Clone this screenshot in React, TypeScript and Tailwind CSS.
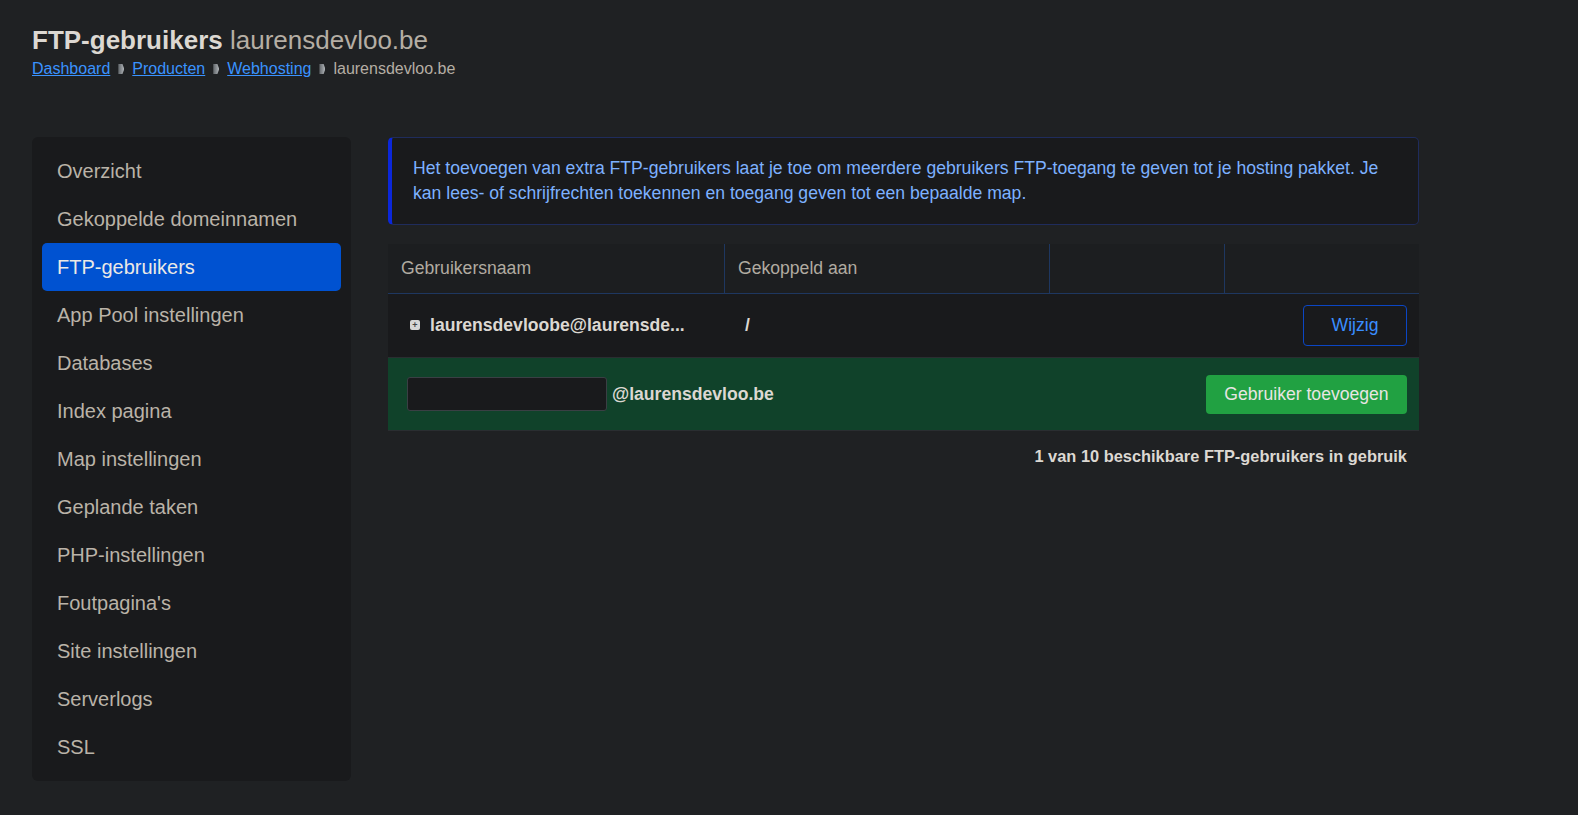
import React from "react";

const items = [
  "Overzicht",
  "Gekoppelde domeinnamen",
  "FTP-gebruikers",
  "App Pool instellingen",
  "Databases",
  "Index pagina",
  "Map instellingen",
  "Geplande taken",
  "PHP-instellingen",
  "Foutpagina's",
  "Site instellingen",
  "Serverlogs",
  "SSL",
];

function Sep() {
  return (
    <span className="mx-[8px] inline-block h-[10px] w-[6px] align-middle bg-gradient-to-r from-[#5d6266] to-[#b0b4b8] [clip-path:polygon(0_0,70%_0,100%_50%,70%_100%,0_100%)]" />
  );
}

export default function App() {
  return (
    <div
      className="min-h-[815px] w-full bg-[#1f2123] px-[32px] pt-[24px]"
      style={{ fontFamily: '"Liberation Sans", Arial, sans-serif' }}
    >
      <h1 className="text-[26px] leading-[32px] text-[#dcd8d2]">
        <span className="font-bold">FTP-gebruikers</span>{" "}
        <span className="text-[#b5aea4]">laurensdevloo.be</span>
      </h1>
      <div className="mt-[3px] flex items-center text-[16px] leading-[20px]">
        <a className="text-[#3a93ff] underline">Dashboard</a>
        <Sep />
        <a className="text-[#3a93ff] underline">Producten</a>
        <Sep />
        <a className="text-[#3a93ff] underline">Webhosting</a>
        <Sep />
        <span className="text-[#b5aea4]">laurensdevloo.be</span>
      </div>

      <div className="mt-[58px] flex items-start gap-[37px]">
        <nav className="w-[319px] shrink-0 rounded-[6px] bg-[#191a1c] p-[10px]">
          {items.map((it) => (
            <div
              key={it}
              className={
                it === "FTP-gebruikers"
                  ? "flex h-[48px] items-center rounded-[5px] bg-[#0052d1] pl-[15px] text-[20px] text-[#ebe9e6]"
                  : "flex h-[48px] items-center pl-[15px] text-[20px] text-[#bab3a8]"
              }
            >
              {it}
            </div>
          ))}
        </nav>

        <main className="w-[1031px]">
          <div className="rounded-[5px] border border-[#1f2c5c] border-l-[4px] border-l-[#0b27da] bg-[#191a1c] px-[21px] py-[18px] text-[17.6px] leading-[25px] text-[#7db1ff]">
            Het toevoegen van extra FTP-gebruikers laat je toe om meerdere gebruikers FTP-toegang te geven tot je hosting pakket. Je kan lees- of schrijfrechten toekennen en toegang geven tot een bepaalde map.
          </div>

          <div className="mt-[19px] text-[17.6px]">
            <div className="grid h-[50px] grid-cols-[337px_325px_175px_1fr] border-b border-[#1e3760] bg-[#1c1e20] text-[#b1aba1]">
              <div className="flex items-center border-r border-[#1e3760] pl-[13px]">Gebruikersnaam</div>
              <div className="flex items-center border-r border-[#1e3760] pl-[13px]">Gekoppeld aan</div>
              <div className="border-r border-[#1e3760]" />
              <div />
            </div>
            <div className="grid h-[63px] grid-cols-[337px_1fr] items-center bg-[#191a1c]">
              <div className="flex items-center pl-[22px] font-bold text-[#dcd8d2]">
                <span className="mr-[10px] flex h-[10px] w-[10px] items-center justify-center rounded-[2px] bg-[#d6d6d6] text-[9px] leading-none text-[#444]">
                  +
                </span>
                laurensdevloobe@laurensde...
              </div>
              <div className="flex items-center justify-between pr-[12px]">
                <span className="pl-[20px] font-bold text-[#dcd8d2]">/</span>
                <button className="h-[41px] w-[104px] rounded-[4px] border border-[#0b46c4] text-[#3a8eff]">
                  Wijzig
                </button>
              </div>
            </div>
            <div className="flex h-[74px] items-center justify-between border-t border-[#2a2e31] border-b border-b-[#2a2e31] bg-[#10422a] pl-[19px] pr-[12px]">
              <div className="flex items-center">
                <div className="h-[34px] w-[200px] rounded-[3px] border border-[#3a3f44] bg-[#191a1c]" />
                <span className="ml-[5px] text-[17.6px] font-bold text-[#dcd8d2]">@laurensdevloo.be</span>
              </div>
              <button className="h-[39px] w-[201px] rounded-[4px] bg-[#21a142] text-[#e8e6e3]">
                Gebruiker toevoegen
              </button>
            </div>
            <div className="mt-[15px] pr-[12px] text-right text-[16.4px] font-bold leading-[20px] text-[#dcd8d2]">
              1 van 10 beschikbare FTP-gebruikers in gebruik
            </div>
          </div>
        </main>
      </div>
    </div>
  );
}
